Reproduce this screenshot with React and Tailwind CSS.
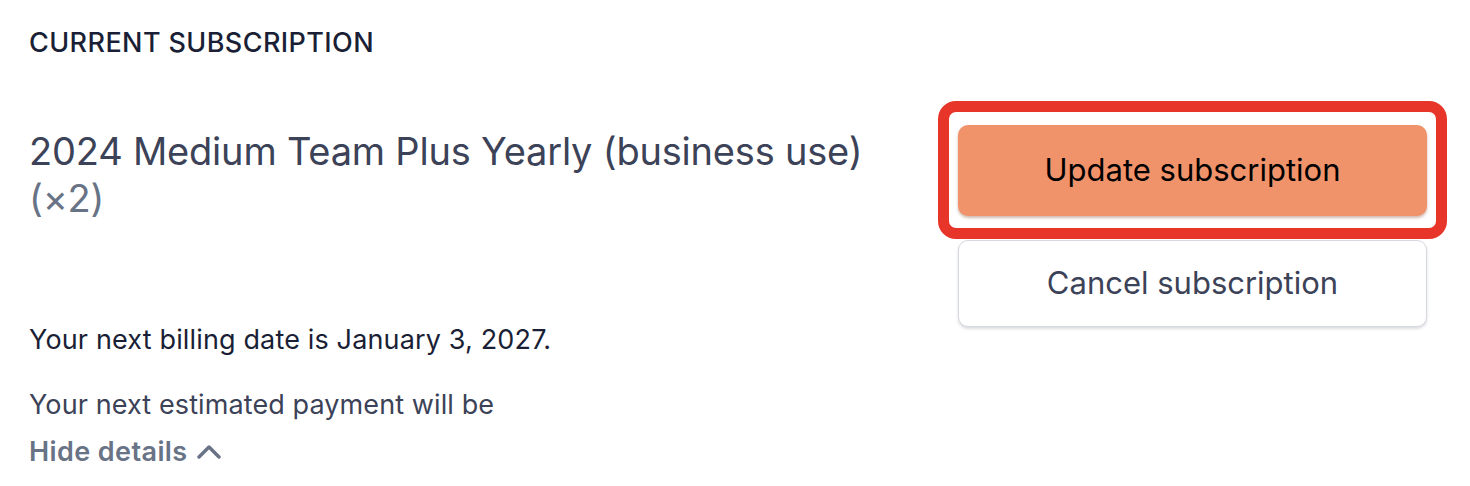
function ChevronUp() {
  return (
    <svg
      viewBox="0 0 24 16"
      className="ml-[9px] h-[16px] w-[24px]"
      fill="none"
      stroke="currentColor"
      strokeWidth="3.4"
      strokeLinecap="round"
      strokeLinejoin="round"
    >
      <polyline points="2,13 12,3 22,13" />
    </svg>
  );
}

export default function App() {
  return (
    <div className="h-[486px] w-[1470px] overflow-hidden bg-white pl-[29px] pr-[43px] font-['Inter',sans-serif]">
      <h2 className="pt-[27px] text-[27px] leading-[32px] font-medium tracking-[0.4px] text-[#1a1f36] uppercase">
        Current subscription
      </h2>

      <div className="mt-[66px] flex items-start justify-between">
        <div className="w-[870px] pt-[3px]">
          <p className="text-[38px] leading-[47px] tracking-[-0.2px] text-[#3c4257]">
            2024 Medium Team Plus Yearly (business use){" "}
            <span className="text-[#697386]">(×2)</span>
          </p>

          <p className="mt-[100px] text-[27px] leading-[36px] tracking-[0.15px] text-[#1a1f36]">
            Your next billing date is January 3, 2027.
          </p>
          <p className="mt-[29px] text-[27px] leading-[36px] tracking-[0.1px] text-[#3c4257]">
            Your next estimated payment will be
          </p>
          <button
            type="button"
            className="mt-[11px] flex items-center text-[27px] leading-[36px] font-semibold tracking-[0.4px] text-[#697386]"
          >
            Hide details
            <ChevronUp />
          </button>
        </div>

        <div className="flex w-[469px] shrink-0 flex-col gap-[24px]">
          <div className="relative">
            <button
              type="button"
              className="flex h-[91px] w-full items-center justify-center rounded-[10px] bg-[#f0936b] text-[31px] text-black shadow-[0_2px_3px_rgba(120,50,20,0.35)]"
            >
              Update subscription
            </button>
            <div className="pointer-events-none absolute -top-[24px] -right-[20px] -bottom-[23px] -left-[20px] rounded-[18px] border-[11px] border-[#e8352a]" />
          </div>
          <button
            type="button"
            className="flex h-[87px] w-full items-center justify-center rounded-[10px] border border-[#d5d8de] bg-white text-[31px] text-[#3c4257] shadow-[0_2px_3px_rgba(60,66,87,0.18)]"
          >
            Cancel subscription
          </button>
        </div>
      </div>
    </div>
  );
}
